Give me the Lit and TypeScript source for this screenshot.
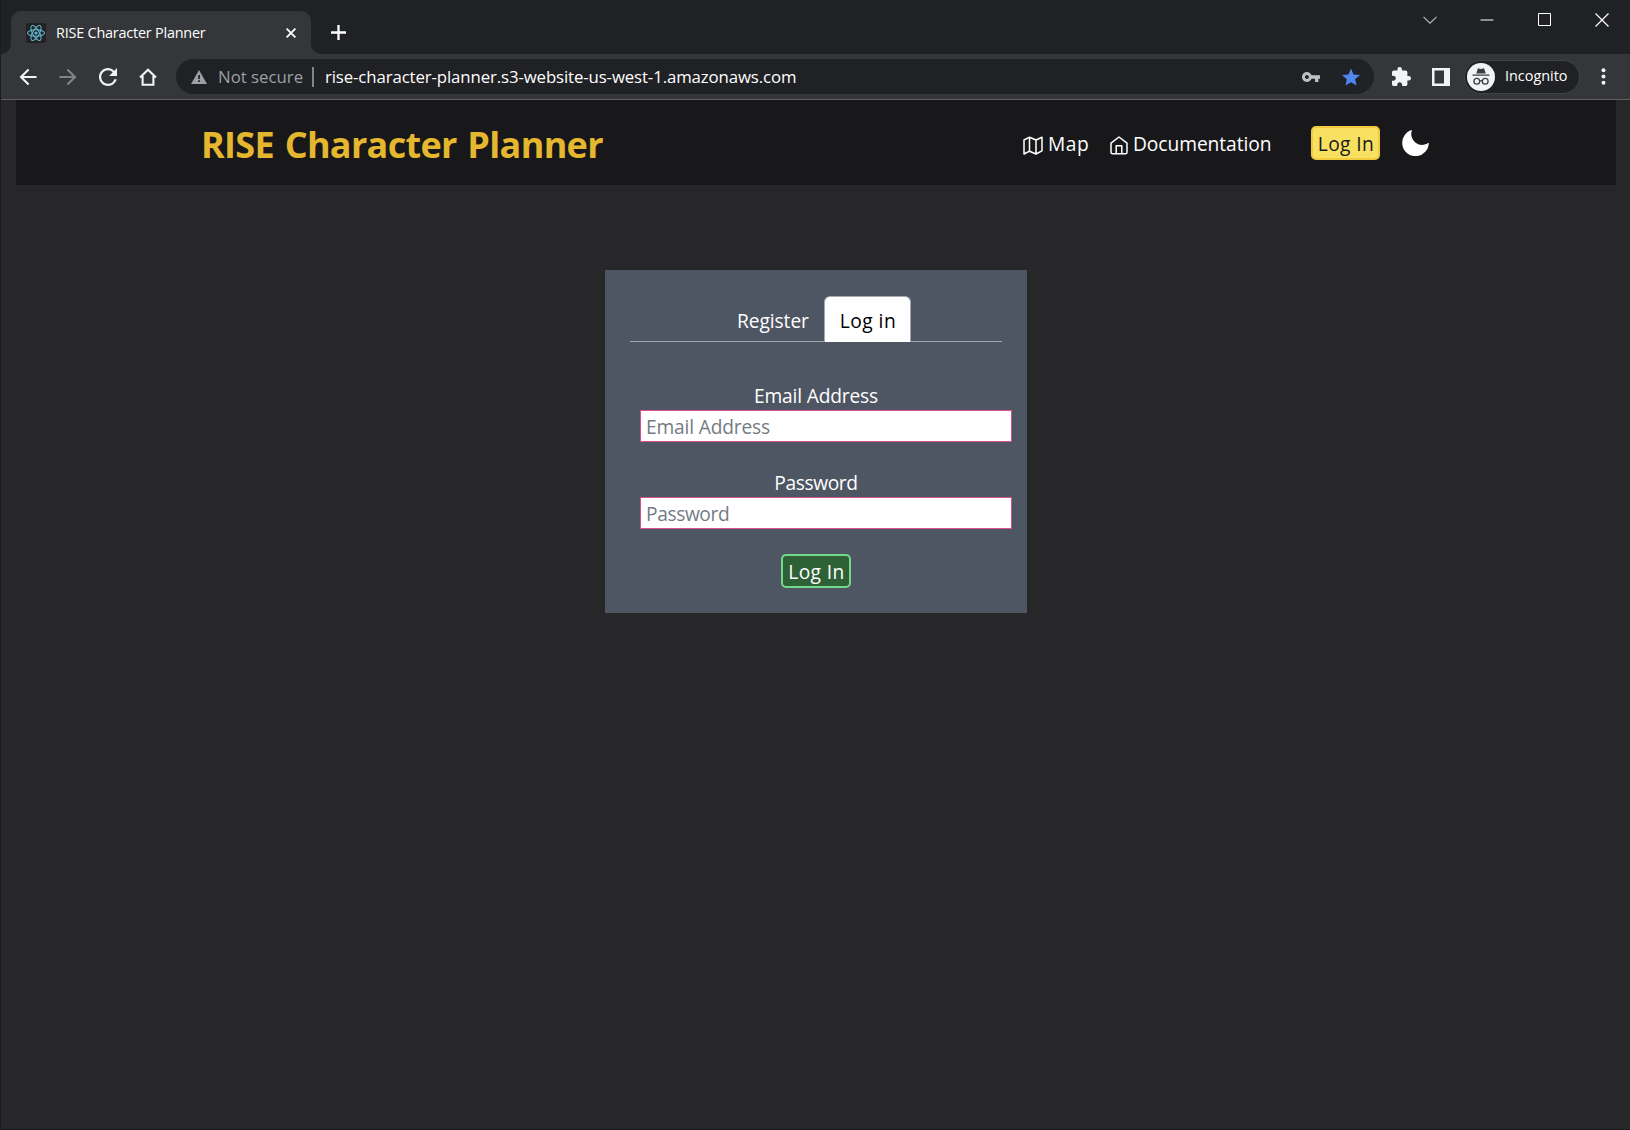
import { LitElement, html, css } from "lit";
import { customElement } from "lit/decorators.js";

@customElement("browser-chrome")
export class BrowserChrome extends LitElement {
  static styles = css`
    :host { display: block; color: #fff; font-family: "Open Sans", "Noto Sans", sans-serif; }
    svg { display: block; flex: none; }
    .strip { display: flex; height: 54px; background: #202124; box-sizing: border-box; padding-top: 11px; align-items: flex-start; }
    .foot { width: 10px; height: 43px; flex: none; display: flex; align-items: flex-end; background: #35363a; }
    .foot i { display: block; width: 10px; height: 43px; background: #202124; border-bottom-right-radius: 10px; }
    .foot.right i { border-radius: 0 0 0 10px; }
    .tab { display: flex; width: 300px; height: 43px; background: #35363a; border-radius: 10px 10px 0 0; box-sizing: border-box; padding-left: 15px; align-items: center; flex: none; }
    .tab-title { font-size: 14.4px; letter-spacing: -0.2px; line-height: 20px; width: 225px; margin: 0 0 0 10px; white-space: nowrap; }
    .tab-close { margin-left: 5px; }
    .new-tab { margin: 14px 0 0 10px; }
    .gap { flex: 1; }
    .win { display: flex; margin: 2px 21px 0 0; align-items: center; gap: 43px; height: 14px; }
    .bar { display: flex; align-items: center; height: 45px; background: #35363a; border-bottom: 1px solid #5f6165; padding-left: 18px; }
    .nav { display: flex; align-items: center; gap: 22px; }
    .omni { display: flex; align-items: center; box-sizing: border-box; width: 1198px; height: 35px; border-radius: 18px; background: #202124; margin-left: 19px; padding: 0 14px 0 15px; font-size: 16.8px; }
    .insecure { color: #9aa0a6; margin-left: 11px; width: 94px; white-space: nowrap; }
    .sep { width: 2px; height: 20px; background: #80868b; margin-right: 11px; }
    .url { letter-spacing: -0.11px; white-space: nowrap; }
    .key { margin-right: 22px; }
    .puzzle { margin-left: 18px; }
    .panel { margin-left: 21px; }
    .pill { display: flex; align-items: center; box-sizing: border-box; width: 116px; height: 34px; border: 1px solid #414246; border-radius: 17px; background: #202124; margin-left: 14px; padding-left: 2px; font-size: 14.4px; }
    .pill span { margin: 0 0 2px 10px; }
    .dots { margin-left: 21px; }
  `;
  render() {
    return html`
      <div class="strip">
        <div class="foot"><i></i></div>
        <div class="tab">
          <svg width="20" height="20" viewBox="0 0 20 20" fill="none" stroke="#61b8d6" stroke-width="1.1">
            <rect width="20" height="20" rx="2" fill="#222" stroke="none" />
            <ellipse cx="10" cy="10" rx="8.5" ry="3.3" />
            <ellipse cx="10" cy="10" rx="8.5" ry="3.3" transform="rotate(60 10 10)" />
            <ellipse cx="10" cy="10" rx="8.5" ry="3.3" transform="rotate(120 10 10)" />
            <circle cx="10" cy="10" r="1.6" fill="#61b8d6" stroke="none" />
          </svg>
          <span class="tab-title">RISE Character Planner</span>
          <svg class="tab-close" width="10" height="10" viewBox="0 0 10 10" stroke="#fff" stroke-width="1.8"><path d="M.6.6l8.8 8.8M9.4.6L.6 9.4" /></svg>
        </div>
        <div class="foot right"><i></i></div>
        <svg class="new-tab" width="15" height="15" viewBox="0 0 15 15" stroke="#fff" stroke-width="2.3"><path d="M7.5 0v15M0 7.5h15" /></svg>
        <div class="gap"></div>
        <div class="win">
          <svg width="14" height="8" viewBox="0 0 14 8" fill="none" stroke="#b8b9bb" stroke-width="1.1"><path d="M.5.8L7 7.2 13.500.8" /></svg>
          <svg width="14" height="2" viewBox="0 0 14 2"><path d="M.5 .5h13v1h-13z" fill="#fff" /></svg>
          <svg width="15" height="14" viewBox="0 0 15 14" fill="none" stroke="#fff"><path d="M1.500.5h12v12h-12z" /></svg>
          <svg width="14" height="14" viewBox="0 0 14 14" stroke="#fff" stroke-width="1.2"><path d="M.5.5l13 13M13.500.5l-13 13" /></svg>
        </div>
      </div>
      <div class="bar">
        <div class="nav">
          <svg width="18" height="18" viewBox="0 0 18 18" fill="none" stroke="#f1f3f4" stroke-width="2.1"><path d="M17.500 9H2.500M9.600 1.400L2 9l7.600 7.600" /></svg>
          <svg width="18" height="18" viewBox="0 0 18 18" fill="none" stroke="#828387" stroke-width="2.1"><path d="M.5 9h15M8.400 1.400L16 9l-7.600 7.600" /></svg>
          <svg width="18" height="18" viewBox="4 4 16 16" fill="#f1f3f4"><path d="M17.65 6.35A7.958 7.958 0 0012 4c-4.420 0-7.990 3.580-7.990 8s3.570 8 7.990 8c3.730 0 6.840-2.550 7.730-6h-2.080A5.990 5.990 0 0112 18c-3.310 0-6-2.690-6-6s2.690-6 6-6c1.660 0 3.140.69 4.220 1.780L13 11h7V4l-2.350 2.350z" /></svg>
          <svg width="18" height="18" viewBox="0 0 18 18" fill="none" stroke="#f1f3f4" stroke-width="2.1"><path d="M1 9.600L9 1.800l8 7.800M3.600 8v8.700h10.800V8" /></svg>
        </div>
        <div class="omni">
          <svg width="16" height="14" viewBox="0 0 16 14"><path d="M8 0l8 14H0z" fill="#9aa0a6" /><path d="M7.200 5h1.700v4H7.200zM7.200 10.300h1.700V12H7.200z" fill="#202124" /></svg>
          <span class="insecure">Not secure</span>
          <i class="sep"></i>
          <span class="url">rise-character-planner.s3-website-us-west-1.amazonaws.com</span>
          <div class="gap"></div>
          <svg class="key" width="18" height="10" viewBox="1 6 22 12" fill="#bdc1c6"><path d="M12.650 10C11.830 7.670 9.610 6 7 6c-3.310 0-6 2.690-6 6s2.690 6 6 6c2.610 0 4.830-1.670 5.650-4H17v4h4v-4h2v-4H12.650zM7 14.400c-1.300 0-2.400-1.100-2.400-2.400S5.700 9.600 7 9.600s2.400 1.100 2.400 2.400-1.100 2.400-2.400 2.400z" /></svg>
          <svg width="18" height="18" viewBox="2 2 20 19" fill="#4f86f0"><path d="M12 17.270L18.180 21l-1.640-7.030L22 9.240l-7.190-.61L12 2 9.190 8.630 2 9.240l5.460 4.730L5.820 21z" /></svg>
        </div>
        <svg class="puzzle" width="19" height="19" viewBox="2 1 21 21" fill="#f1f3f4"><path d="M20.500 11H19V7c0-1.100-.9-2-2-2h-4V3.500a2.500 2.500 0 00-5 0V5H4c-1.100 0-2 .9-2 2v3.800h1.500c1.490 0 2.700 1.210 2.700 2.700s-1.210 2.700-2.700 2.700H2V20c0 1.100.9 2 2 2h3.800v-1.500c0-1.490 1.210-2.700 2.700-2.700s2.700 1.210 2.700 2.700V22H17c1.100 0 2-.9 2-2v-4h1.500a2.500 2.500 0 000-5z" /></svg>
        <svg class="panel" width="18" height="18" viewBox="0 0 18 18"><path d="M0 0h18v18H0z" fill="#f1f3f4" /><path d="M2.500 2.500h9.500v13H2.500z" fill="#35363a" /></svg>
        <div class="pill">
          <svg width="28" height="28" viewBox="0 0 28 28">
            <circle cx="14" cy="14" r="14" fill="#f1f3f4" />
            <path d="M9.200 10.500l1.500-4.500q.3-.8 1.100-.6l2.200.5 2.200-.5q.8-.2 1.100.6l1.500 4.500zM5.500 11.500h17v1.300h-17z" fill="#3c3d41" />
            <g fill="none" stroke="#3c3d41" stroke-width="1.300"><circle cx="9.800" cy="18.300" r="2.900" /><circle cx="18.200" cy="18.300" r="2.900" /><path d="M12.700 18q1.300-.8 2.600 0" /></g>
          </svg>
          <span>Incognito</span>
        </div>
        <svg class="dots" width="5" height="17" viewBox="0 0 5 17" fill="#f1f3f4"><circle cx="2.500" cy="2.200" r="2" /><circle cx="2.500" cy="8.500" r="2" /><circle cx="2.500" cy="14.800" r="2" /></svg>
      </div>
    `;
  }
}

@customElement("site-header")
export class SiteHeader extends LitElement {
  static styles = css`
    :host { display: block; margin: 0 14px 0 15px; }
    .header { display: flex; align-items: center; box-sizing: border-box; height: 85px; background: #18181b; padding: 1px 184px 0 185px; color: #fff; font-size: 19.2px; line-height: 30px; }
    .title { margin: 0; padding-top: 4px; font-size: 36px; line-height: 40px; font-weight: 700; letter-spacing: -0.68px; word-spacing: 2px; color: #e4b72f; width: 822px; white-space: nowrap; }
    .link { display: flex; align-items: center; color: #fff; text-decoration: none; white-space: nowrap; }
    .link span { padding-top: 2px; }
    svg { display: block; flex: none; margin-top: 5px; }
    .map { width: 87px; }
    .map span { letter-spacing: 0.5px; margin-left: 5px; }
    .docs { width: 201px; }
    .docs span { margin-left: 5px; letter-spacing: -0.06px; }
    .login { box-sizing: border-box; width: 69px; height: 34px; border: 2px solid #f1cb3d; border-radius: 5px; background: #f8e160; color: #18181b; font: inherit; letter-spacing: 0.4px; line-height: 29px; padding: 1px 0 0 1px; white-space: nowrap; text-align: center; }
    .moon { margin: 0 0 2px 22px; }
  `;
  render() {
    return html`
      <header class="header">
        <h1 class="title">RISE Character Planner</h1>
        <a class="link map">
          <svg width="20" height="19" viewBox="0 0 20 19" fill="none" stroke="#fff" stroke-width="1.5" stroke-linejoin="round"><path d="M1 4l5.500-2.800L13 4l6-2.800v13.600L13 18l-6.500-2.800L1 18zM6.500 1.200v14M13 4v14" /></svg>
          <span>Map</span>
        </a>
        <a class="link docs">
          <svg width="18" height="19" viewBox="0 0 18 19" fill="none" stroke="#fff" stroke-width="1.500" stroke-linejoin="round"><path d="M1 7.200L9 1l8 6.200v9q0 1.600-1.600 1.600H2.600Q1 17.800 1 16.200zM6.200 17.800V9.800h5.600v8" /></svg>
          <span>Documentation</span>
        </a>
        <button class="login">Log In</button>
        <svg class="moon" width="27" height="27" viewBox="0 0 27 27"><path d="M10 1A11 11 0 0026.800 13.800 13.300 13.300 0 1110 1z" fill="#fff" /></svg>
      </header>
    `;
  }
}

@customElement("login-card")
export class LoginCard extends LitElement {
  static styles = css`
    :host { display: block; width: 422px; margin: 85px auto 0 604px; }
    .card { box-sizing: border-box; height: 343px; background: #4e5563; padding: 26px 25px 0; color: #fff; font-size: 19.2px; line-height: 30px; }
    .tabs { display: flex; height: 45px; border-bottom: 1px solid #a5a8b0; padding-left: 91px; }
    .tab { box-sizing: border-box; height: 46px; padding: 10px 0 0 16px; white-space: nowrap; }
    .register { width: 103px; letter-spacing: -0.08px; }
    .active { width: 87px; background: #fff; color: #000; border: 1px solid #a5a8b0; border-bottom: 0; border-radius: 6px 6px 0 0; padding: 9px 0 0 1px; text-align: center; letter-spacing: 0.45px; }
    .form { display: flex; flex-direction: column; padding-top: 39px; }
    .label { height: 29px; text-align: center; letter-spacing: -0.17px; }
    .label.pass, .input.pass::placeholder { letter-spacing: -0.4px; }
    .input { box-sizing: border-box; width: 372px; height: 32px; margin: 0 0 26px 10px; border: 1px solid #d9508f; border-radius: 0; background: #fff; padding: 1px 5px 0; font: inherit; outline: none; }
    .input::placeholder { color: #757b85; opacity: 1; letter-spacing: -0.17px; }
    .submit { align-self: center; box-sizing: border-box; width: 70px; height: 34px; margin-top: -1px; border: 2px solid #74da87; border-radius: 5px; background: #2f6137; color: #fff; font: inherit; letter-spacing: 0.4px; line-height: 29px; padding: 1px 0 0 1px; text-align: center; white-space: nowrap; }
  `;
  render() {
    return html`
      <section class="card">
        <nav class="tabs"><a class="tab register">Register</a><a class="tab active">Log in</a></nav>
        <form class="form">
          <label class="label">Email Address</label>
          <input class="input" type="email" placeholder="Email Address" />
          <label class="label pass">Password</label>
          <input class="input pass" type="password" placeholder="Password" />
          <button class="submit" type="button">Log In</button>
        </form>
      </section>
    `;
  }
}

@customElement("app-root")
export class AppRoot extends LitElement {
  static styles = css`
    :host { display: block; font-family: "Open Sans", "Noto Sans", sans-serif; }
    .window { box-sizing: border-box; height: 1130px; background: #27272a; border: solid #1c1c1d; border-width: 0 0 1px 1px; overflow: hidden; }
  `;
  render() {
    return html`
      <div class="window">
        <browser-chrome></browser-chrome>
        <site-header></site-header>
        <login-card></login-card>
      </div>
    `;
  }
}
